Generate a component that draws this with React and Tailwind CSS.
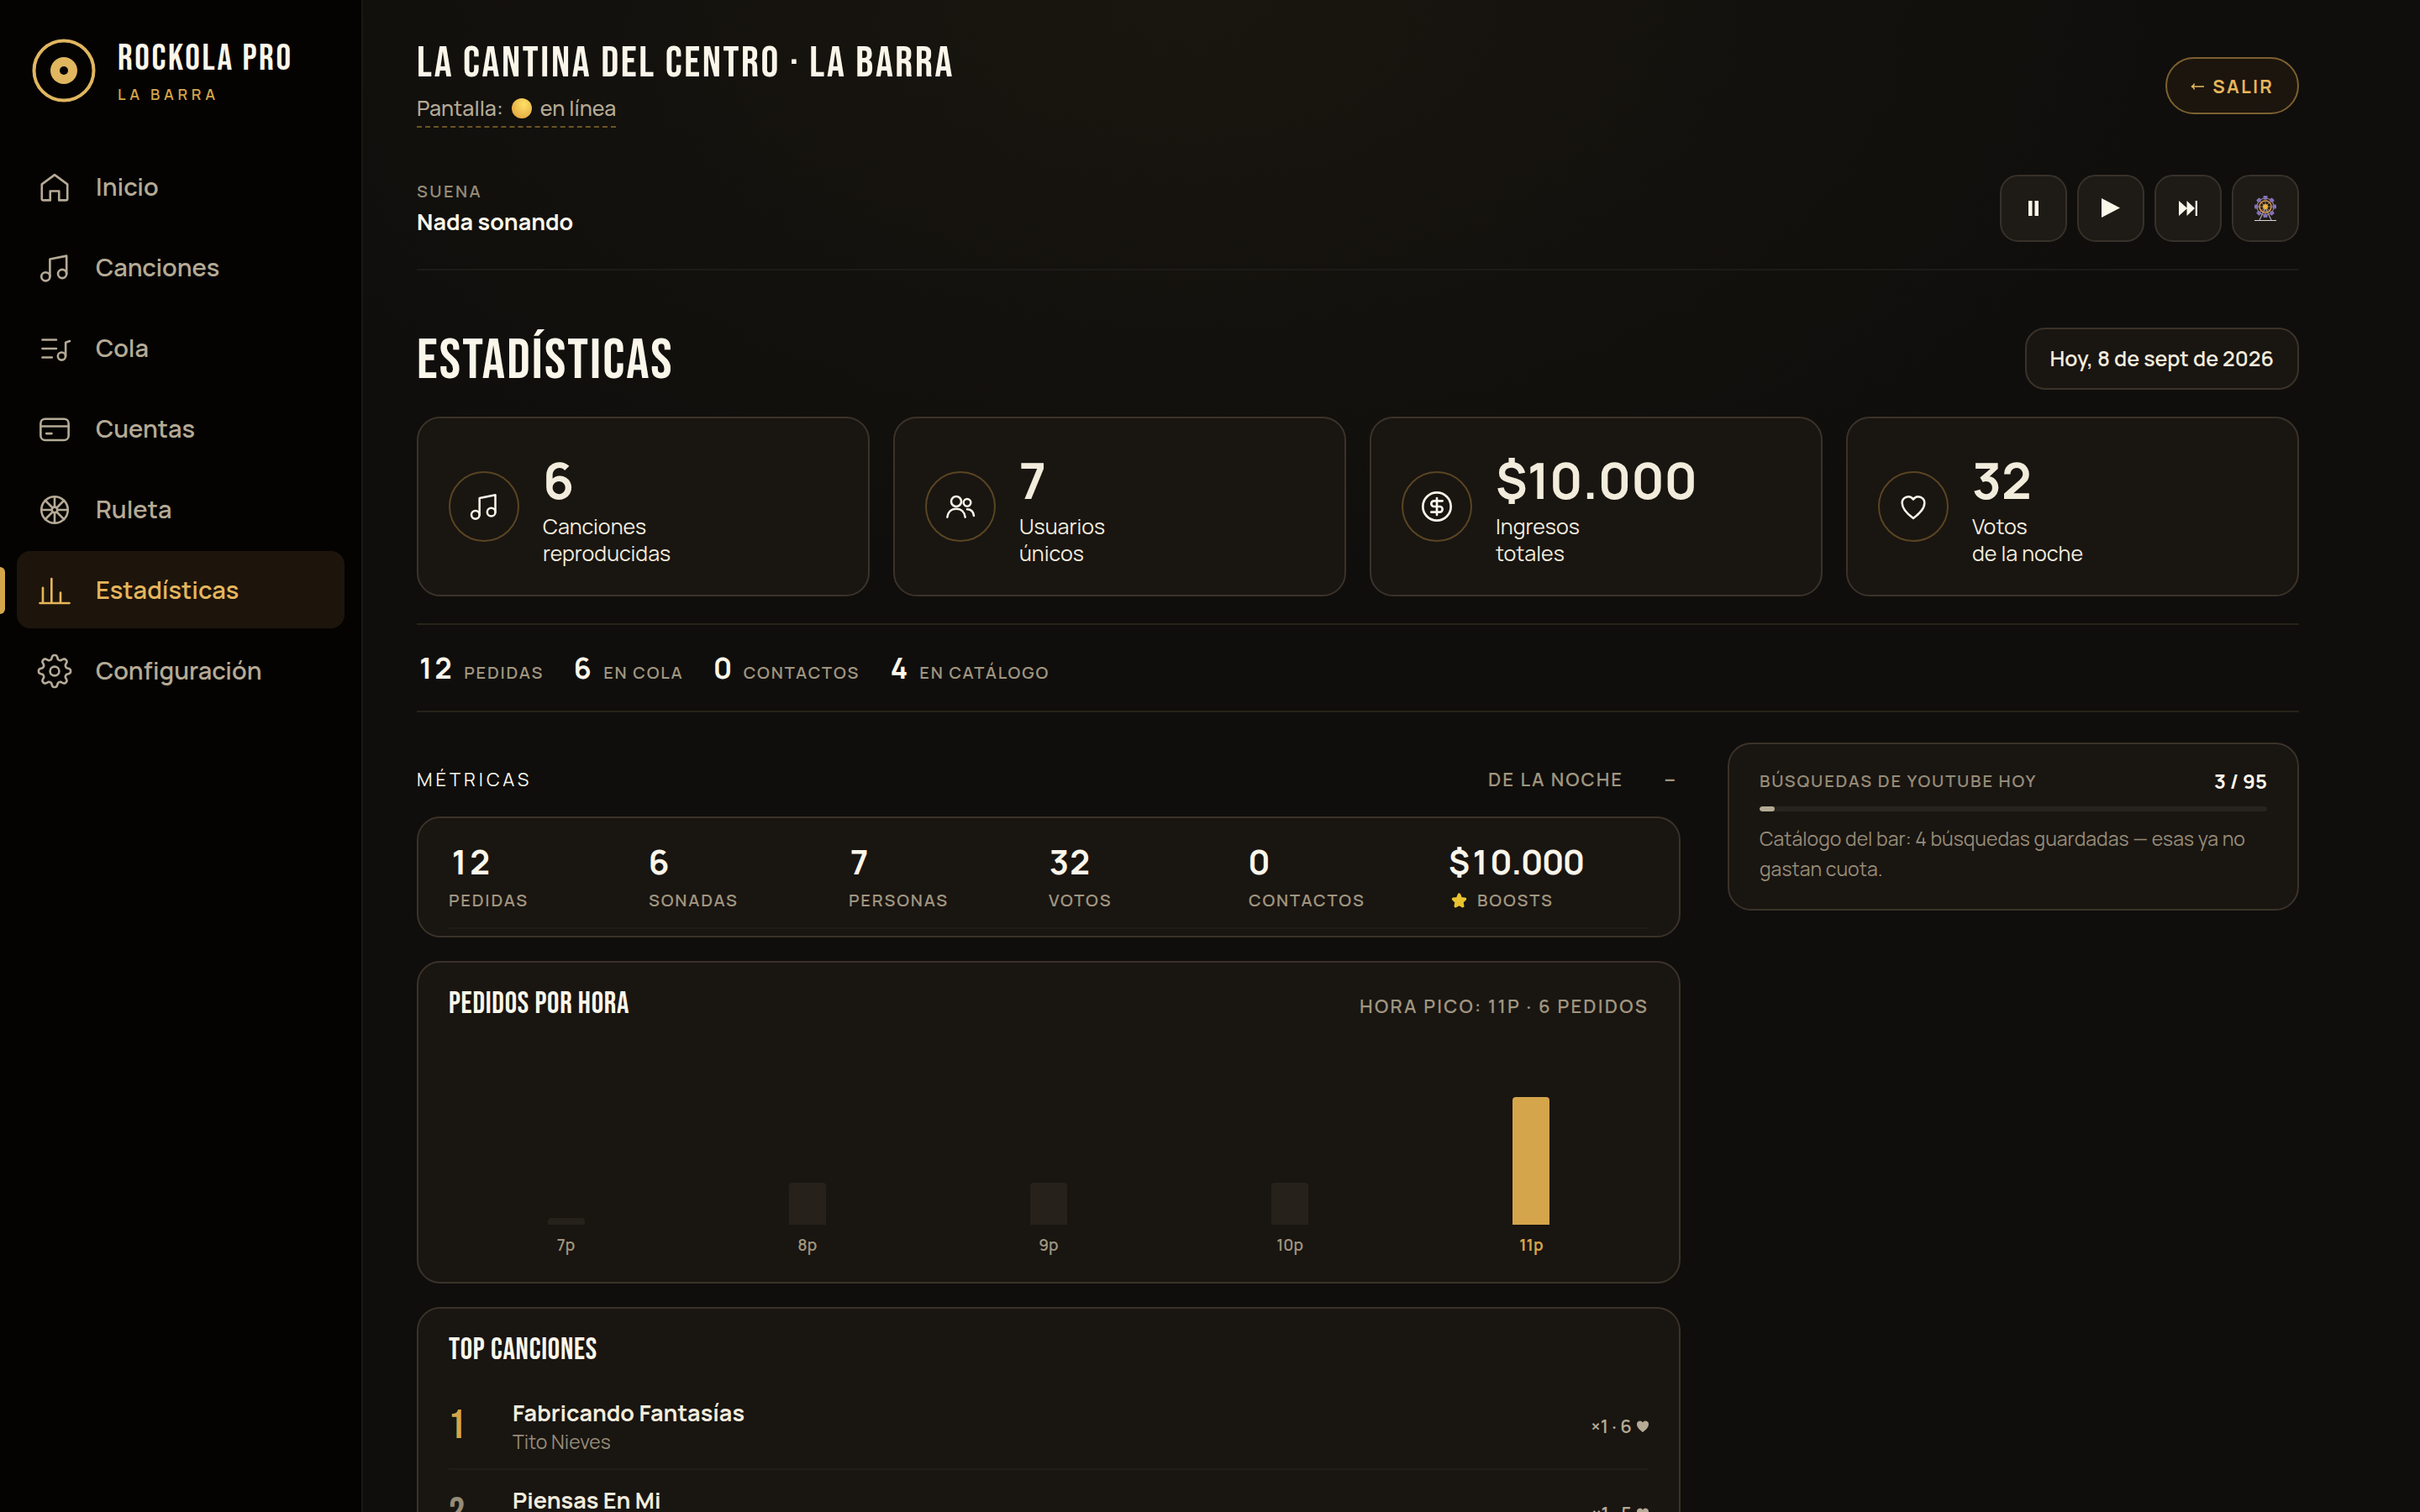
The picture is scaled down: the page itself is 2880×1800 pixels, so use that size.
// src/pages/EstadisticasPage.jsx
import { CircleDollarSign } from 'lucide-react';

// Outline of the settings cog: eight rounded teeth around the centre
const cogPath = (() => {
  const points = [];
  for (let i = 0; i < 160; i++) {
    const angle = (i / 160) * Math.PI * 2;
    const r = 9.5 + 1.5 * Math.tanh(1.6 * Math.cos(angle * 8));
    points.push(`${(12 + r * Math.sin(angle)).toFixed(2)} ${(12 - r * Math.cos(angle)).toFixed(2)}`);
  }
  return `M${points.join('L')}Z`;
})();

const icons = {
  home: <path d="M3.3 9.9 12 3.5l8.7 6.4v9.9a1 1 0 0 1-1 1H15v-6.2H9v6.2H4.3a1 1 0 0 1-1-1z" />,
  music: (
    <>
      <circle cx="5.9" cy="17.9" r="2.9" />
      <circle cx="17.2" cy="16" r="2.9" />
      <path d="M8.8 17.9V6l11.3-2.2V16" />
    </>
  ),
  queue: (
    <>
      <path d="M3.7 6h9.4M3.7 12h9.4M3.7 18h6.5" />
      <circle cx="16.8" cy="17.2" r="2.6" />
      <path d="M19.5 17.2V7.8l2.8-.9" />
    </>
  ),
  card: (
    <>
      <rect x="2.5" y="5" width="19" height="14.4" rx="3" />
      <path d="M2.5 10h19M6.4 14.9h3.6" />
    </>
  ),
  wheel: (
    <>
      <circle cx="12" cy="12" r="9" />
      <circle cx="12" cy="12" r="1.9" />
      <path d="M12 3v7M12 14v7M3 12h7M14 12h7M5.6 5.6l5 5M13.4 13.4l5 5M18.4 5.6l-5 5M10.6 13.4l-5 5" />
    </>
  ),
  stats: <path d="M2 20.6h20M4 20.6V10.2M9.9 20.6V4M16 20.6v-7.2" />,
  cog: (
    <>
      <path d={cogPath} />
      <circle cx="12" cy="12" r="3.1" />
    </>
  ),
  users: (
    <>
      <circle cx="9" cy="8.4" r="3.6" />
      <path d="M2.6 19.6c.4-3.7 2.9-6 6.4-6s6 2.3 6.4 6" />
      <circle cx="16.8" cy="9.2" r="2.6" />
      <path d="M16.8 14c2.7 0 4.4 1.7 4.8 4.6" />
    </>
  ),
  heart: <path d="M12 20.4C6.6 16.4 4 13 4 9.4a4.4 4.4 0 0 1 8-2.5 4.4 4.4 0 0 1 8 2.5c0 3.6-2.6 7-8 11z" />,
};

function Icon({ name, className }) {
  if (name === 'money') return <CircleDollarSign className={className} strokeWidth={1.6} aria-hidden="true" />;
  return (
    <svg viewBox="0 0 24 24" fill="none" stroke="currentColor" strokeWidth="1.5" strokeLinecap="round" strokeLinejoin="round" className={className} aria-hidden="true">
      {icons[name]}
    </svg>
  );
}

const navItems = [
  { label: 'Inicio', icon: 'home' },
  { label: 'Canciones', icon: 'music' },
  { label: 'Cola', icon: 'queue' },
  { label: 'Cuentas', icon: 'card' },
  { label: 'Ruleta', icon: 'wheel' },
  { label: 'Estadísticas', icon: 'stats', active: true },
  { label: 'Configuración', icon: 'cog' },
];

const cards = [
  { icon: 'music', value: '6', lines: ['Canciones', 'reproducidas'] },
  { icon: 'users', value: '7', lines: ['Usuarios', 'únicos'] },
  { icon: 'money', value: '$10.000', lines: ['Ingresos', 'totales'] },
  { icon: 'heart', value: '32', lines: ['Votos', 'de la noche'] },
];

const summary = [
  { value: '12', label: 'Pedidas' },
  { value: '6', label: 'En cola' },
  { value: '0', label: 'Contactos' },
  { value: '4', label: 'En catálogo' },
];

const metrics = [
  { value: '12', label: 'Pedidas' },
  { value: '6', label: 'Sonadas' },
  { value: '7', label: 'Personas' },
  { value: '32', label: 'Votos' },
  { value: '0', label: 'Contactos' },
  { value: '$10.000', label: 'Boosts', star: true },
];

const hours = [
  { label: '7p', count: 0 },
  { label: '8p', count: 2 },
  { label: '9p', count: 2 },
  { label: '10p', count: 2 },
  { label: '11p', count: 6 },
];
const peak = Math.max(...hours.map((h) => h.count));

const songs = [
  { title: 'Fabricando Fantasías', artist: 'Tito Nieves', plays: 1, votes: 6 },
  { title: 'Piensas En Mi', artist: 'Grupo Niche', plays: 1, votes: 5 },
];

const youtube = { used: 3, limit: 95 };

function Sidebar() {
  return (
    <aside className="flex w-[432px] shrink-0 flex-col border-r-2 border-[#1a1815] bg-[#040302]">
      <div className="flex h-[168px] items-center gap-6 px-9">
        <svg viewBox="0 0 80 80" className="size-20" aria-hidden="true">
          <circle cx="40" cy="40" r="35.5" fill="none" stroke="#e0b65f" strokeWidth="4" />
          <circle cx="40" cy="40" r="16" fill="#e0b65f" />
          <circle cx="40" cy="40" r="5" fill="#040302" />
        </svg>
        <div className="pt-1">
          <p className="font-['Bebas_Neue','Roboto_Condensed',sans-serif] text-[44px] leading-12 tracking-[0.06em] text-[#fbf6ea]">ROCKOLA PRO</p>
          <p className="mt-1 text-[18px] leading-7 font-semibold tracking-[0.26em] text-[#d4a54a]">LA BARRA</p>
        </div>
      </div>
      <nav className="mt-2 flex flex-col gap-1 px-5">
        {navItems.map((item) => (
          <a
            key={item.label}
            href="#"
            aria-current={item.active ? 'page' : undefined}
            className={`relative flex h-[92px] items-center gap-7 rounded-2xl px-6 pt-0.5 text-[29px] font-semibold ${
              item.active ? 'bg-[#1d150b] text-[#e6b65c]' : 'text-[#b5aa95]'
            }`}
          >
            {item.active && <span className="absolute -left-5 h-14 w-1.5 rounded-r-md bg-[#d4a54a]" />}
            <Icon name={item.icon} className="size-[42px]" />
            {item.label}
          </a>
        ))}
      </nav>
    </aside>
  );
}

// Ferris wheel drawn on the roulette button
function FerrisWheel() {
  const cabins = [0, 45, 90, 135, 180, 225, 270, 315];
  return (
    <svg viewBox="0 0 28 32" className="h-8 w-7" aria-hidden="true">
      <path d="M14 15 7 30M14 15l7 15" stroke="#a9a3b8" strokeWidth="1.2" />
      <path d="M1 30.5h26" stroke="#d9d6de" strokeWidth="1" />
      <circle cx="14" cy="14" r="10" fill="none" stroke="#a9805a" strokeWidth="1.2" />
      <circle cx="14" cy="14" r="7" fill="none" stroke="#d29a50" strokeWidth="1.6" />
      {cabins.map((deg) => (
        <g key={deg} transform={`rotate(${deg} 14 14)`}>
          <path d="M14 14V4" stroke="#a9805a" strokeWidth="1" />
          <rect x="11.5" y="1" width="5" height="4.4" rx="1" fill="#8271bb" />
        </g>
      ))}
      <circle cx="14" cy="14" r="3" fill="#f2b13c" />
    </svg>
  );
}

function ControlButton({ label, children }) {
  return (
    <button type="button" aria-label={label} className="flex size-20 items-center justify-center rounded-[22px] border-2 border-[#37312a] bg-[#1e1a15] text-[#fbf6ea]">
      {children}
    </button>
  );
}

function Header() {
  return (
    <header>
      <div className="flex items-center justify-between">
        <div>
          <h1 className="font-['Bebas_Neue','Roboto_Condensed',sans-serif] text-[52px] leading-12 tracking-[0.05em]">LA CANTINA DEL CENTRO · LA BARRA</h1>
          <a href="#" className="mt-3 inline-flex h-10 items-center border-b-2 border-dashed border-[#6b5424] pb-1 text-[25px] font-medium text-[#b5aa95]">
            Pantalla:
            <span className="mx-2.5 size-6 rounded-full bg-radial-[at_60%_30%] from-[#ffe066] to-[#dc9a38]" />
            en línea
          </a>
        </div>
        <button type="button" className="flex h-[68px] items-center gap-2.5 rounded-full border-2 border-[#7d6030] bg-[#1c150d] px-7 pt-0.5 text-[22px] font-bold tracking-widest text-[#e6b65c]">
          <svg viewBox="0 0 16 10" className="h-2.5 w-4" fill="none" stroke="currentColor" strokeWidth="1.4" aria-hidden="true">
            <path d="M16 5H1M4.5 1.5C4 3.5 2.5 4.7 1 5c1.5.3 3 1.500 3.500 3.500" />
          </svg>
          SALIR
        </button>
      </div>

      <div className="mt-14 flex items-center justify-between border-b-2 border-[#1d1b18] pb-8">
        <div>
          <p className="text-[20px] leading-7 font-semibold tracking-[0.12em] text-[#958b77]">SUENA</p>
          <p className="mt-1 text-[27px] leading-9 font-bold">Nada sonando</p>
        </div>
        <div className="flex gap-3">
          <ControlButton label="Pausar">
            <svg viewBox="0 0 24 24" className="size-6" fill="currentColor" aria-hidden="true">
              <path d="M6 3h4.5v18H6zM13.5 3H18v18h-4.5z" />
            </svg>
          </ControlButton>
          <ControlButton label="Reproducir">
            <svg viewBox="0 0 24 24" className="size-6" fill="currentColor" aria-hidden="true">
              <path d="M1 0v23l22-11.5z" />
            </svg>
          </ControlButton>
          <ControlButton label="Siguiente">
            <svg viewBox="0 0 24 24" className="size-6" fill="currentColor" aria-hidden="true">
              <path d="M1 3v18l9.5-8.5V21L20 12 10.5 3v8.5zM20.7 3H23v18h-2.3z" />
            </svg>
          </ControlButton>
          <ControlButton label="Ruleta">
            <FerrisWheel />
          </ControlButton>
        </div>
      </div>
    </header>
  );
}

function StatCard({ icon, value, lines }) {
  return (
    <div className="flex items-center gap-7 rounded-[28px] border-2 border-[#3b3229] bg-[#191511] px-9 py-[33px]">
      <div className="flex size-[84px] shrink-0 items-center justify-center rounded-full border-2 border-[#5a4522]">
        <Icon name={icon} className="size-10" />
      </div>
      <div className="text-[#f2ecdc]">
        <p className="text-[60px] leading-20 font-bold">{value}</p>
        <p className="text-[25px] leading-8">
          {lines[0]}
          <br />
          {lines[1]}
        </p>
      </div>
    </div>
  );
}

function HourChart() {
  return (
    <section className="mt-7 rounded-[28px] border-2 border-[#3b3229] bg-[#191511] px-9 pt-[30px] pb-[30px]">
      <div className="flex items-baseline justify-between">
        <h3 className="font-['Bebas_Neue','Roboto_Condensed',sans-serif] text-[36px] leading-10 tracking-[0.02em]">PEDIDOS POR HORA</h3>
        <p className="text-[22px] leading-7 font-semibold tracking-widest text-[#a0957f]">HORA PICO: 11P · 6 PEDIDOS</p>
      </div>
      <div className="mt-[22px] flex gap-2">
        {hours.map((hour) => {
          const isPeak = hour.count === peak;
          return (
            <div key={hour.label} className="flex flex-1 flex-col items-center">
              <div className="flex h-[220px] items-end">
                <div
                  className={`w-11 rounded-t ${isPeak ? 'bg-[#d4a54a]' : 'bg-[#27211b]'}`}
                  style={{ height: Math.max(8, Math.floor((hour.count / peak) * 152)) }}
                />
              </div>
              <span className={`mt-2.5 text-[19px] leading-7 ${isPeak ? 'font-bold text-[#d4a54a]' : 'font-semibold text-[#a0957f]'}`}>
                {hour.label}
              </span>
            </div>
          );
        })}
      </div>
    </section>
  );
}

function TopSongs() {
  return (
    <section className="mt-7 rounded-[28px] border-2 border-[#3b3229] bg-[#191511] px-9 pt-[30px] pb-[30px]">
      <h3 className="font-['Bebas_Neue','Roboto_Condensed',sans-serif] text-[36px] leading-10 tracking-[0.02em]">TOP CANCIONES</h3>
      <ol className="mt-[18px]">
        {songs.map((song, index) => (
          <li key={song.title} className="flex items-center border-b-2 border-[#201c17] pt-[18px] pb-4">
            <span
              className={`w-19 font-['Bebas_Neue','Roboto_Condensed',sans-serif] text-[48px] leading-none ${
                index === 0 ? 'text-[#d4a54a]' : 'text-[#958b77]'
              }`}
            >
              {index + 1}
            </span>
            <div className="flex-1">
              <p className="text-[27px] leading-9 font-bold text-[#f2ecdc]">{song.title}</p>
              <p className="text-[23px] leading-8 text-[#958b77]">{song.artist}</p>
            </div>
            <span className="flex items-center gap-1.5 text-[22px] font-semibold text-[#b5aa95]">
              ×{song.plays} · {song.votes}
              <svg viewBox="0 0 14 14" className="size-3.5" fill="currentColor" aria-hidden="true">
                <path d="M7 14C2.5 10.5 0 8 0 4.5A3.7 3.7 0 0 1 7 2.6 3.7 3.7 0 0 1 14 4.5C14 8 11.5 10.5 7 14z" />
              </svg>
            </span>
          </li>
        ))}
      </ol>
    </section>
  );
}

function YoutubeQuota() {
  return (
    <aside className="w-[680px] shrink-0 self-start rounded-[28px] border-2 border-[#3b3229] bg-[#191511] px-9 pt-7 pb-[30px]">
      <div className="flex items-center justify-between">
        <h3 className="text-[20px] leading-8 font-semibold tracking-[0.09em] text-[#958b77]">BÚSQUEDAS DE YOUTUBE HOY</h3>
        <p className="text-2xl leading-8 font-bold">
          {youtube.used} / {youtube.limit}
        </p>
      </div>
      <div className="mt-3.5 h-1.5 overflow-hidden rounded-full bg-[#27231e]">
        <div className="h-full rounded-full bg-[#b5aa95]" style={{ width: `${Math.round((youtube.used / youtube.limit) * 100)}%` }} />
      </div>
      <p className="mt-3.5 text-[23px] leading-9 text-[#958b77]">
        Catálogo del bar: 4 búsquedas guardadas — esas ya no gastan cuota.
      </p>
    </aside>
  );
}

function App() {
  return (
    <div className="flex h-screen bg-[#0f0e0c] font-['Manrope','Inter',sans-serif] text-[#fbf6ea]">
      <Sidebar />
      <main className="flex-1 overflow-y-auto bg-[radial-gradient(ellipse_50%_40%_at_40%_0%,#19160f,#0f0e0c)] pt-[52px] pr-36 pb-16 pl-16 [scrollbar-width:none]">
        <Header />

        <div className="mt-[68px] flex items-center justify-between">
          <h2 className="pt-1.5 font-['Bebas_Neue','Roboto_Condensed',sans-serif] text-[68px] leading-none tracking-[0.03em]">ESTADÍSTICAS</h2>
          <button type="button" className="h-[74px] rounded-3xl border-2 border-[#3b3229] bg-[#191511] px-7 text-[25px] font-semibold text-[#f2ecdc]">
            Hoy, 8 de sept de 2026
          </button>
        </div>

        <div className="mt-8 grid grid-cols-4 gap-7">
          {cards.map((card) => (
            <StatCard key={card.value} {...card} />
          ))}
        </div>

        <div className="mt-8 flex gap-9 border-y-2 border-[#272319] py-[27px]">
          {summary.map((item) => (
            <p key={item.label} className="flex items-baseline gap-3.5">
              <span className="text-[34px] leading-12 font-bold tabular-nums">{item.value}</span>
              <span className="text-[20px] font-semibold tracking-[0.09em] text-[#a0957f] uppercase">{item.label}</span>
            </p>
          ))}
        </div>

        <div className="mt-9 flex gap-14">
          <div className="min-w-0 flex-1">
            <div className="flex justify-between py-[30px] text-[22px] leading-7">
              <h3 className="tracking-[0.18em]">MÉTRICAS</h3>
              <p className="flex gap-12 pr-1 font-semibold tracking-[0.09em] text-[#a0957f]">
                <span>DE LA NOCHE</span>
                <span className="text-[26px]">−</span>
              </p>
            </div>

            <section className="rounded-[28px] border-2 border-[#3b3229] bg-[#191511] px-9 pt-7 pb-2">
              <div className="grid grid-cols-6 border-b-2 border-[#1f1b17] pb-[18px]">
                {metrics.map((item) => (
                  <div key={item.label}>
                    <p className="text-[40px] leading-12 font-bold tabular-nums">{item.value}</p>
                    <p className="mt-2 flex items-center gap-2.5 text-[20px] leading-7 font-semibold tracking-[0.09em] text-[#a0957f] uppercase">
                      {item.star && (
                        <svg viewBox="0 0 24 24" className="size-6" aria-hidden="true">
                          <path d="m12.5 5 2 4.600 5 .6-3.600 3.500.9 5-4.300-2.400-4.300 2.400.9-5-3.600-3.500 5-.6z" fill="#e9c330" stroke="#e9c330" strokeWidth="3.4" strokeLinejoin="round" />
                        </svg>
                      )}
                      {item.label}
                    </p>
                  </div>
                ))}
              </div>
            </section>

            <HourChart />
            <TopSongs />
          </div>
          <YoutubeQuota />
        </div>
      </main>
    </div>
  );
}

export default App;
